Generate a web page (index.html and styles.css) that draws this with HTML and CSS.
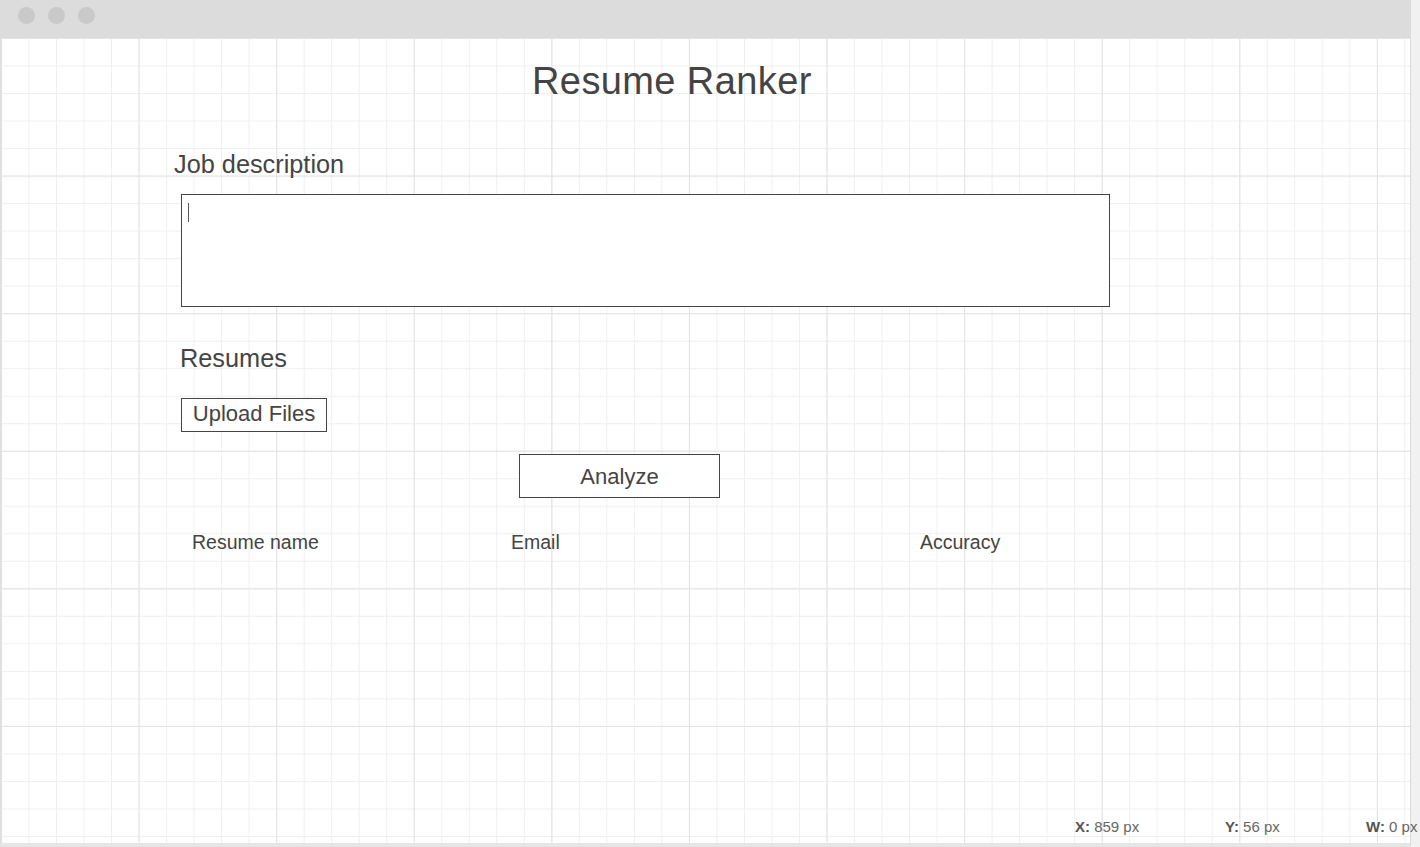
FILE: index.html
```html
<!DOCTYPE html>
<html lang="en">
<head>
<meta charset="utf-8">
<title>Resume Ranker</title>
<link rel="stylesheet" href="styles.css">
</head>
<body>
<div class="window">
  <div class="titlebar">
    <span class="dot"></span>
    <span class="dot"></span>
    <span class="dot"></span>
  </div>
  <div class="canvas">
    <main class="content">
      <h1 class="title">Resume Ranker</h1>
      <div class="label label-job">Job description</div>
      <div class="textarea"><span class="caret"></span></div>
      <h2 class="label label-resumes">Resumes</h2>
      <button class="btn btn-upload">Upload Files</button>
      <button class="btn btn-analyze">Analyze</button>
      <div class="table-head">
        <span class="col col-name">Resume name</span>
        <span class="col col-email">Email</span>
        <span class="col col-acc">Accuracy</span>
      </div>
    </main>
    <footer class="status">
      <span class="stat stat-x"><b>X:</b> 859 px</span>
      <span class="stat stat-y"><b>Y:</b> 56 px</span>
      <span class="stat stat-w"><b>W:</b> 0 px</span>
    </footer>
  </div>
</div>
</body>
</html>
```

FILE: styles.css
```css
html, body {
  margin: 0;
  padding: 0;
}

body {
  width: 1420px;
  height: 847px;
  overflow: hidden;
  background: #f1f1f1;
  font-family: "Liberation Sans", Arial, sans-serif;
  color: #444444;
}

.window {
  width: 1411px;
  height: 847px;
  display: flex;
  flex-direction: column;
}

.titlebar {
  height: 38px;
  flex: 0 0 38px;
  box-sizing: border-box;
  background: #dcdcdc;
  display: flex;
  align-items: flex-start;
  gap: 13px;
  padding: 7px 0 0 18px;
}

.dot {
  width: 17px;
  height: 17px;
  border-radius: 50%;
  background: #c9c9c9;
}

.canvas {
  flex: 0 0 809px;
  height: 809px;
  box-sizing: border-box;
  border-left: 1px solid #dedede;
  border-right: 1px solid #d9d9d9;
  border-bottom: 4px solid #e6e6e6;
  background-color: #ffffff;
  background-image:
    linear-gradient(to right, #e3e3e3 1px, transparent 1px),
    linear-gradient(to bottom, #e3e3e3 1px, transparent 1px),
    linear-gradient(to right, #efefef 1px, transparent 1px),
    linear-gradient(to bottom, #efefef 1px, transparent 1px);
  background-size:
    137.6px 137.6px,
    137.6px 137.6px,
    27.52px 27.52px,
    27.52px 27.52px;
  background-position: 0 0;
  display: flex;
  flex-direction: column;
  padding-bottom: 8px;
}

.content {
  display: flex;
  flex-direction: column;
  align-items: flex-start;
  padding: 22px 0 0 173px;
}

.title {
  margin: 0 0 0 358px;
  font-size: 38px;
  line-height: 43px;
  font-weight: normal;
  letter-spacing: 0.4px;
}

.label {
  margin: 0;
  font-size: 25.3px;
  line-height: 28px;
  font-weight: normal;
}

.label-job {
  margin-top: 47px;
  margin-left: 0;
}

.textarea {
  margin: 16px 0 0 7px;
  width: 929px;
  height: 113px;
  box-sizing: border-box;
  border: 1px solid #444444;
  background: #ffffff;
  padding: 8px 0 0 6px;
}

.caret {
  display: block;
  width: 1px;
  height: 19px;
  background: #555555;
}

.label-resumes {
  margin-top: 37px;
  margin-left: 6px;
}

.btn {
  display: block;
  box-sizing: border-box;
  border: 1px solid #444444;
  background: #ffffff;
  color: #444444;
  font-family: "Liberation Sans", Arial, sans-serif;
  font-size: 22px;
  padding: 0;
  margin: 0;
  text-align: center;
  border-radius: 0;
}

.btn-upload {
  margin: 26px 0 0 7px;
  width: 146px;
  height: 34px;
  line-height: 29px;
  padding-bottom: 3px;
}

.btn-analyze {
  margin: 22px 0 0 345px;
  width: 201px;
  height: 44px;
  line-height: 40px;
  padding-top: 2px;
}

.table-head {
  margin: 33px 0 0 18px;
  display: grid;
  grid-template-columns: 319px 409px 200px;
  font-size: 19.5px;
  line-height: 22px;
}

.status {
  margin-top: auto;
  display: flex;
  padding-left: 1074px;
  font-size: 15px;
  line-height: 16px;
  color: #666666;
  white-space: nowrap;
}

.status b {
  color: #555555;
}

.stat {
  flex: 0 0 auto;
}

.stat-x {
  width: 150px;
}

.stat-y {
  width: 141px;
}
```
